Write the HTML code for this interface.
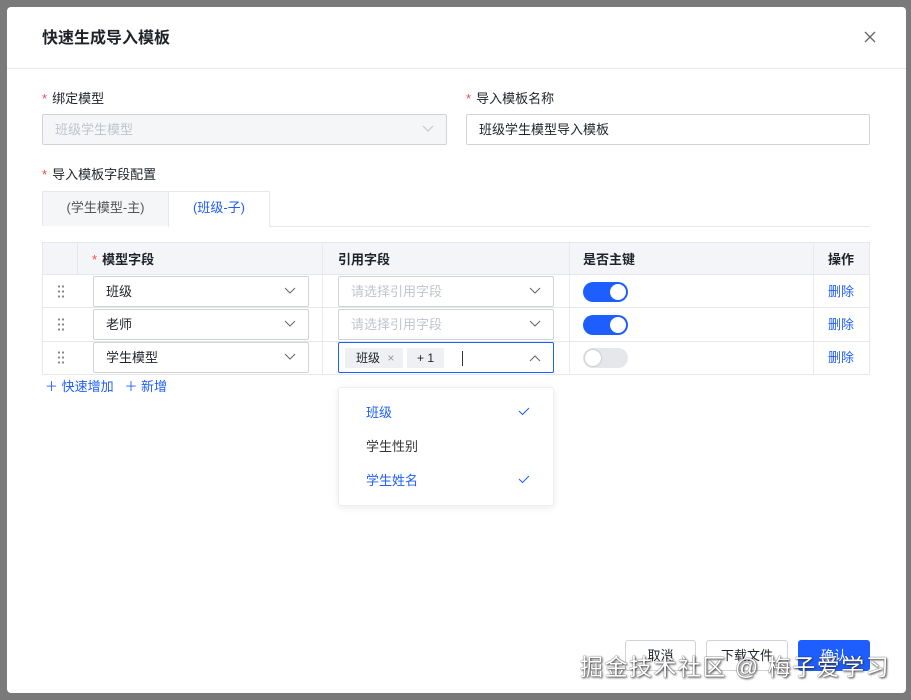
<!DOCTYPE html>
<html><head><meta charset="utf-8"><style>
*{box-sizing:border-box;margin:0;padding:0}
body{width:911px;height:700px;background:#7a7a7a;font-family:"Liberation Sans","Noto Sans CJK SC",sans-serif;font-size:13px;color:#1f2329;position:relative;overflow:hidden}
.a{position:absolute}
.dlg{left:7px;top:7px;width:899px;height:686px;background:#fff;border-radius:4px}
.inp{position:absolute;border:1px solid #d0d3d9;border-radius:2px;background:#fff;height:31px;padding-left:12px;line-height:29px;font-size:13px}
.ph{color:#c0c4cc}
.chev{position:absolute;right:12px;top:10px}
.star{color:#f54a45;margin-right:5px}
.lbl{font-size:13px;color:#1f2329}
.th{background:#f3f5f8;font-size:13px;font-weight:bold;color:#1f2329}
.sw{position:absolute;width:45px;height:20px;border-radius:10px;background:#1e5eff}
.sw i{position:absolute;top:2px;right:2px;width:16px;height:16px;border-radius:50%;background:#fff}
.sw.off{background:#e5e7eb}.sw.off i{left:2px;right:auto;box-shadow:0 0 2px rgba(0,0,0,.3)}
.del{color:#1e5eff;font-size:13px}
.dots{position:absolute;width:8px;height:14px;background-image:radial-gradient(circle,#888 1px,transparent 1.3px);background-size:4px 5px}
.btn{position:absolute;height:31px;border:1px solid #d0d3d9;border-radius:3px;background:#fff;text-align:center;line-height:29px;font-size:13px}
</style></head><body>
<div class="a dlg"></div>
<div class="a" style="left:42px;top:24px;font-size:16px;font-weight:bold">快速生成导入模板</div>
<svg class="a" style="left:864px;top:31px" width="12" height="12"><path d="M1 1L11 11M11 1L1 11" stroke="#666" stroke-width="1.3"/></svg>
<div class="a" style="left:7px;top:68px;width:899px;height:1px;background:#e8eaed"></div>

<div class="a lbl" style="left:42px;top:88px"><span class="star">*</span>绑定模型</div>
<div class="a lbl" style="left:466px;top:88px"><span class="star">*</span>导入模板名称</div>
<div class="inp ph" style="left:42px;top:114px;width:405px;background:#f5f6f8">班级学生模型<svg class="chev" width="12" height="8"><path d="M1 1L6 6L11 1" stroke="#c0c4cc" fill="none"/></svg></div>
<div class="inp" style="left:466px;top:114px;width:404px">班级学生模型导入模板</div>

<div class="a lbl" style="left:42px;top:164px"><span class="star">*</span>导入模板字段配置</div>
<div class="a" style="left:42px;top:191px;width:127px;height:35px;background:#f5f6f8;border:1px solid #e5e7eb;border-bottom:none;text-align:center;line-height:32px;color:#555">(学生模型-主)</div>
<div class="a" style="left:168px;top:191px;width:102px;height:36px;background:#fff;border:1px solid #e5e7eb;border-bottom:none;text-align:center;line-height:32px;color:#1e5eff">(班级-子)</div>
<div class="a" style="left:269px;top:226px;width:601px;height:1px;background:#e5e7eb"></div>

<div class="a" style="left:42px;top:242px;width:828px;height:133px;border:1px solid #e5e7eb"></div>
<div class="a th" style="left:43px;top:243px;width:826px;height:31px"></div>
<div class="a th" style="left:92px;top:249px"><span class="star" style="font-weight:normal">*</span>模型字段</div>
<div class="a th" style="left:338px;top:249px">引用字段</div>
<div class="a th" style="left:583px;top:249px">是否主键</div>
<div class="a th" style="left:828px;top:249px">操作</div>
<div class="a" style="left:77px;top:243px;width:1px;height:31px;background:#e5e7eb"></div>
<div class="a" style="left:322px;top:243px;width:1px;height:132px;background:#e8eaed"></div>
<div class="a" style="left:569px;top:243px;width:1px;height:132px;background:#e8eaed"></div>
<div class="a" style="left:813px;top:243px;width:1px;height:132px;background:#e8eaed"></div>
<div class="a" style="left:43px;top:274px;width:826px;height:1px;background:#e5e7eb"></div>
<div class="a" style="left:43px;top:307px;width:826px;height:1px;background:#e5e7eb"></div>
<div class="a" style="left:43px;top:341px;width:826px;height:1px;background:#e5e7eb"></div>

<div class="dots" style="left:57px;top:284px"></div>
<div class="dots" style="left:57px;top:317px"></div>
<div class="dots" style="left:57px;top:350px"></div>

<div class="inp" style="left:93px;top:276px;width:216px">班级<svg class="chev" width="12" height="8"><path d="M1 1L6 6L11 1" stroke="#666" fill="none"/></svg></div>
<div class="inp" style="left:93px;top:309px;width:216px">老师<svg class="chev" width="12" height="8"><path d="M1 1L6 6L11 1" stroke="#666" fill="none"/></svg></div>
<div class="inp" style="left:93px;top:342px;width:216px">学生模型<svg class="chev" width="12" height="8"><path d="M1 1L6 6L11 1" stroke="#666" fill="none"/></svg></div>

<div class="inp ph" style="left:338px;top:276px;width:216px">请选择引用字段<svg class="chev" width="12" height="8"><path d="M1 1L6 6L11 1" stroke="#666" fill="none"/></svg></div>
<div class="inp ph" style="left:338px;top:309px;width:216px">请选择引用字段<svg class="chev" width="12" height="8"><path d="M1 1L6 6L11 1" stroke="#666" fill="none"/></svg></div>
<div class="inp" style="left:338px;top:342px;width:216px;border-color:#1e5eff;padding-left:0">
<span class="a" style="left:6px;top:5px;height:20px;width:58px;background:#eef0f3;line-height:20px;padding-left:11px;font-size:12px">班级 <span style="color:#999;margin-left:4px">×</span></span>
<span class="a" style="left:68px;top:5px;height:20px;width:37px;background:#eef0f3;line-height:20px;text-align:center;font-size:12px">+ 1</span>
<span class="a" style="left:123px;top:8px;width:1px;height:15px;background:#333"></span>
<svg class="chev" width="12" height="8" style="top:11px"><path d="M1 7L6 2L11 7" stroke="#666" fill="none"/></svg></div>

<div class="sw" style="left:583px;top:282px"><i></i></div>
<div class="sw" style="left:583px;top:315px"><i></i></div>
<div class="sw off" style="left:583px;top:348px"><i></i></div>
<div class="a del" style="left:828px;top:281px">删除</div>
<div class="a del" style="left:828px;top:314px">删除</div>
<div class="a del" style="left:828px;top:347px">删除</div>

<div class="a" style="left:45px;top:376px;color:#1e5eff">＋ 快速增加 &nbsp; ＋ 新增</div>

<div class="a" style="left:338px;top:387px;width:216px;height:119px;background:#fff;border:1px solid #eceef1;border-radius:3px;box-shadow:0 2px 8px rgba(0,0,0,.08)"></div>
<div class="a" style="left:366px;top:402px;color:#1e5eff">班级</div>
<div class="a" style="left:366px;top:436px;color:#333">学生性别</div>
<div class="a" style="left:366px;top:470px;color:#1e5eff">学生姓名</div>
<svg class="a" style="left:518px;top:407px" width="12" height="9"><path d="M1 4L4.5 7.5L11 1" stroke="#1e5eff" fill="none"/></svg>
<svg class="a" style="left:518px;top:475px" width="12" height="9"><path d="M1 4L4.5 7.5L11 1" stroke="#1e5eff" fill="none"/></svg>

<div class="btn" style="left:625px;top:640px;width:71px">取消</div>
<div class="btn" style="left:706px;top:640px;width:82px">下载文件</div>
<div class="btn" style="left:798px;top:640px;width:72px;background:#1e5eff;border-color:#1e5eff;color:#fff">确认</div>
<div class="a" style="left:580px;top:648px;font-size:23px;color:#fff;text-shadow:1px 1px 2px #333,0 0 1px #000;letter-spacing:1.5px">掘金技术社区 @ 梅子爱学习</div>
</body></html>
